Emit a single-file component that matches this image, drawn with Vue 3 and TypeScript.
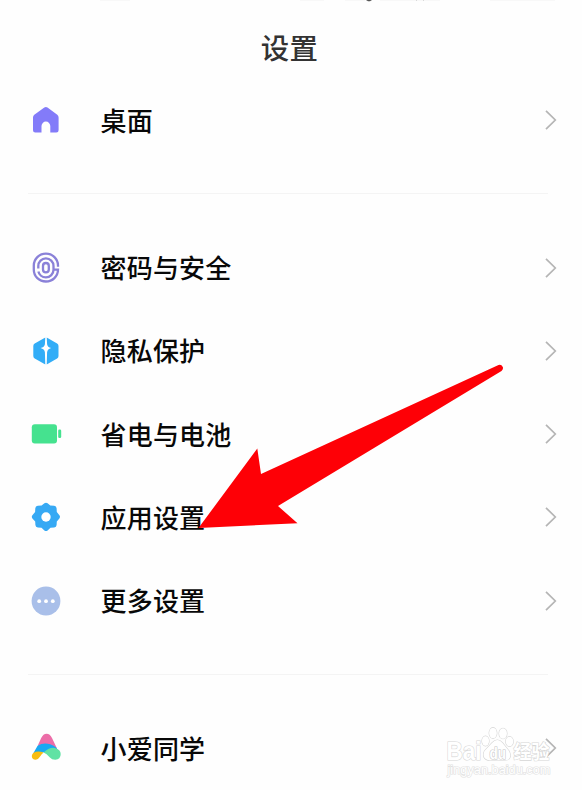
<script setup lang="ts">
interface SettingItem {
  id: string
  label: string
}

const groups: SettingItem[][] = [
  [{ id: 'home', label: '桌面' }],
  [
    { id: 'fingerprint', label: '密码与安全' },
    { id: 'privacy', label: '隐私保护' },
    { id: 'battery', label: '省电与电池' },
    { id: 'apps', label: '应用设置' },
    { id: 'more', label: '更多设置' },
  ],
  [{ id: 'assistant', label: '小爱同学' }],
]
</script>

<template>
  <main class="screen">
    <svg class="scrolled" width="582" height="2" viewBox="0 0 582 2">
      <path d="M366 0h6l-2 1.200h-2z" fill="#555" />
      <path d="M100 .3h30M300 .3h24M345 .3h20M380 .3h60M490 .3h65" stroke="#f2f2f2" stroke-width=".6" />
      <path d="M416 0l1 1M423 0l1 1" stroke="#ccc" stroke-width=".7" />
    </svg>
    <header class="header"><h1 class="title">设置</h1></header>

    <section v-for="(group, index) in groups" :key="index" class="group">
      <div v-for="item in group" :key="item.id" class="row">
        <svg class="icon" width="32" height="32" viewBox="0 0 32 32">
          <path
            v-if="item.id === 'home'"
            d="M14.300 3.600a2.500 2.500 0 0 1 3.200 0l9.800 7.200a3.200 3.200 0 0 1 1.300 2.600v12.800a2.300 2.300 0 0 1-2.300 2.300h-6V22a4.400 4.400 0 0 0-8.800 0v6.500H5.300A2.300 2.300 0 0 1 3 26.200V13.400a3.200 3.200 0 0 1 1.300-2.600z"
            fill="#837bf9"
          />
          <g v-else-if="item.id === 'fingerprint'" fill="none" stroke="#8a81d8" stroke-width="2.300">
            <rect x="13" y="11" width="5.800" height="9.400" rx="2.900" />
            <path d="M8.300 16.600V14a7.600 7.600 0 0 1 15.200 0v3.800c0 4.200-3.400 7.600-7.600 7.600-3.800 0-6.800-2.600-7.500-6" />
            <path d="M28 14.700v-1.200C28 7 22.600 1.700 15.900 1.700S3.800 7 3.800 13.500v4.300c0 6.600 5.400 11.700 12.100 11.700 6.600 0 12.100-5.100 12.100-11.900h-4.500" />
          </g>
          <g v-else-if="item.id === 'privacy'">
            <path
              d="M14 3.200Q16 2 18 3.200l9.100 5.200q1.400.8 1.400 2.500v10.200q0 1.700-1.400 2.500L18 28.800q-2 1.200-4 0l-9.300-5.200q-1.400-.8-1.400-2.500V10.900q0-1.700 1.400-2.500z"
              fill="#32adf7"
            />
            <path d="M15.300 2h1.400l.4 7.200q.4 2.900 4 3.800-3.600 1-4 4.200L16.700 30h-1.400l-.4-12.800q-.4-3.200-4.400-4.200 4-.9 4.400-3.800z" fill="#fff" />
          </g>
          <g v-else-if="item.id === 'battery'" fill="#45e28f">
            <rect x="1.800" y="6.300" width="25.200" height="19.200" rx="3" />
            <rect x="28.200" y="11.500" width="3" height="8.600" rx="1.300" />
          </g>
          <g v-else-if="item.id === 'apps'">
            <path
              d="M14.400 2.300q1.600-1.300 3.200 0L20.300 4.600l3.900.2q2.200.2 2.400 2.400l.2 3.800 2.600 3.200q1.200 1.600 0 3.200L26.800 20.500l-.2 3.600q-.2 2.300-2.400 2.500l-3.700.2-2.900 2.600q-1.600 1.200-3.200 0l-2.900-2.600-3.700-.2q-2.200-.2-2.400-2.500l-.2-3.600L2.400 17.400q-1.200-1.600 0-3.200L5.100 11l.2-3.800q.2-2.200 2.400-2.400l3.900-.2z"
              fill="#36a9f4"
            />
            <circle cx="16" cy="16" r="4.700" fill="#fff" />
          </g>
          <g v-else-if="item.id === 'more'">
            <circle cx="16" cy="16" r="14.400" fill="#a9bfe9" />
            <g fill="#fff">
              <circle cx="9.200" cy="16.200" r="1.900" />
              <circle cx="16" cy="16.200" r="1.900" />
              <circle cx="22.800" cy="16.200" r="1.900" />
            </g>
          </g>
          <g v-else>
            <path d="M7.800 13.500 11.200 6q2-4.300 5.400-4.300T22 6l5 10.500L18 19z" fill="#ec6da8" />
            <path d="M3.200 21.500 7.600 13.700q6-3.700 12.600-1.400 3.600 1.300 6.200 3.500L29 21l-12.200-.5q-5-1-8.600 1.500z" fill="#18a8f2" />
            <path d="M13.600 20.600q5.500-5.600 11.200-4.600 5.900 1.400 5.900 6.100 0 5.500-5.500 5.700-3.300 0-5.600-2.500-3-3.600-6-4.700z" fill="#61e2a4" />
            <path d="M3.200 20.900q4.600-2.400 10.400-.3-1.900 1.300-3.700 4.200-1.700 2.900-4.200 2.900-3.900-.2-3.900-3.700.1-1.700 1.400-3.100z" fill="#f8bd12" />
          </g>
        </svg>
        <span class="label">{{ item.label }}</span>
        <svg class="chevron" width="14" height="22" viewBox="0 0 14 22">
          <path d="M2 1.800 11.300 11 2 20.200" fill="none" stroke="#b5b5b5" stroke-width="1.700" />
        </svg>
      </div>
    </section>

    <svg class="pointer" width="582" height="790" viewBox="0 0 582 790">
      <path d="M198.500 528 257.300 448.500 261 474 498.500 365q3.500-1 4.500 2.500.3 2-1.500 3.500L278 506l19.500 17.300z" fill="#fe0006" />
    </svg>

    <svg class="watermark" width="122" height="58" viewBox="0 0 122 58">
      <g class="mark">
        <text x="4.500" y="39" font-size="25" textLength="35" lengthAdjust="spacingAndGlyphs">Bai</text>
        <ellipse cx="43.500" cy="20" rx="3.500" ry="4.800" />
        <ellipse cx="51" cy="12" rx="3.800" ry="5.300" />
        <ellipse cx="61" cy="12.500" rx="3.900" ry="5.200" />
        <ellipse cx="67.500" cy="20.500" rx="3.700" ry="4.800" />
        <path d="M50 22q5.500-6 10.500 0l6.500 8q4 8-4 9.500-7-1-15 0-9-1.500-5.500-9.500z" />
        <text class="du" x="47.500" y="37.500" font-size="16" textLength="16.500" lengthAdjust="spacingAndGlyphs">du</text>
        <text x="71.500" y="38" font-size="19" textLength="36" lengthAdjust="spacingAndGlyphs">经验</text>
        <text class="url" x="5.500" y="53" font-size="12" textLength="103" lengthAdjust="spacingAndGlyphs">jingyan.baidu.com</text>
      </g>
    </svg>
  </main>
</template>

<style>
body {
  margin: 0;
  background: #fefefe;
}
</style>

<style scoped>
.screen {
  position: relative;
  width: 582px;
  height: 790px;
  overflow: hidden;
  background: #fefefe;
  font-family: "Noto Sans CJK SC", sans-serif;
}
.scrolled {
  position: absolute;
  top: 0;
  left: 0;
}
.header {
  display: flex;
  justify-content: center;
  height: 78.5px;
}
.title {
  margin: 26.5px 3px 0 0;
  font-size: 28.4px;
  line-height: 40px;
  font-weight: 500;
  letter-spacing: 0.3px;
  color: #333;
}
.group + .group {
  margin-top: 31.4px;
  padding-top: 32.7px;
  background: linear-gradient(#f4f4f4, #f4f4f4) 28px 0 / 520px 1px no-repeat;
}
.row {
  display: flex;
  align-items: center;
  height: 83.3px;
  padding: 0 24px 0 30px;
}
.icon {
  flex: none;
}
.label {
  flex: 1;
  margin-left: 38.500px;
  padding-bottom: 1px;
  font-size: 26px;
  line-height: 38px;
  font-weight: 500;
  letter-spacing: 0.2px;
  color: #080808;
}
.chevron {
  flex: none;
}
.pointer {
  position: absolute;
  top: 0;
  left: 0;
  pointer-events: none;
}
.watermark {
  position: absolute;
  left: 442px;
  top: 721px;
  font-family: "Liberation Sans", "Noto Sans CJK SC", sans-serif;
  font-weight: 700;
}
.mark {
  fill: #fff;
  stroke: #d6d6d6;
  stroke-width: 1.2px;
  paint-order: stroke;
}
.du {
  fill: #fff;
  stroke: #c6c6c6;
}
.url {
  font-weight: 400;
  stroke: #e0e0e0;
}
</style>
